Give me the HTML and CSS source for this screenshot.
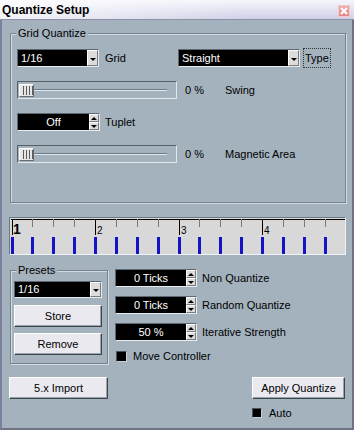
FILE: index.html
```html
<!DOCTYPE html>
<html lang="en">
<head>
  <meta charset="UTF-8">
  <meta name="viewport" content="width=device-width, initial-scale=1.0">
  <title>Quantize Setup</title>
  <link rel="stylesheet" href="styles.css">
</head>
<body>
  <div class="window">
    <div class="titlebar">
      <span class="title">Quantize Setup</span>
      <span class="close">
        <svg width="10" height="10" viewBox="0 0 10 10"><path d="M2 2 L8 8 M8 2 L2 8" stroke="#fff" stroke-width="2"/></svg>
      </span>
    </div>

    <div class="pane">
      <!-- Grid quantize -->
      <div class="group grid-group">
        <div class="group-title">Grid Quantize</div>

        <div class="row row-first">
          <div class="combo combo-grid"><span class="val">1/16</span><span class="drop"></span></div>
          <span class="lbl lbl-grid">Grid</span>
          <div class="combo combo-type"><span class="val">Straight</span><span class="drop"></span></div>
          <span class="lbl focus">Type</span>
        </div>

        <div class="row">
          <div class="slider"><span class="thumb"></span><span class="groove"></span></div>
          <span class="pct">0 %</span>
          <span class="lbl">Swing</span>
        </div>

        <div class="row">
          <div class="spin spin-tuplet"><span class="val">Off</span><span class="arrows"><span class="up"></span><span class="down"></span></span></div>
          <span class="lbl lbl-spin">Tuplet</span>
        </div>

        <div class="row">
          <div class="slider"><span class="thumb"></span><span class="groove"></span></div>
          <span class="pct">0 %</span>
          <span class="lbl">Magnetic Area</span>
        </div>
      </div>

      <!-- Grid display -->
      <div class="ruler">
        <svg width="335" height="36" viewBox="0 0 335 36">
          <rect x="1" y="1" width="334" height="1" fill="#000"/>
          <g stroke="#7a7a7a" stroke-width="1">
            <line x1="22.5" y1="1" x2="22.5" y2="9"/>
            <line x1="43.5" y1="1" x2="43.5" y2="9"/>
            <line x1="64.5" y1="1" x2="64.5" y2="9"/>
            <line x1="106.5" y1="1" x2="106.5" y2="9"/>
            <line x1="127.5" y1="1" x2="127.5" y2="9"/>
            <line x1="148.5" y1="1" x2="148.5" y2="9"/>
            <line x1="189.5" y1="1" x2="189.5" y2="9"/>
            <line x1="210.5" y1="1" x2="210.5" y2="9"/>
            <line x1="231.5" y1="1" x2="231.5" y2="9"/>
            <line x1="273.5" y1="1" x2="273.5" y2="9"/>
            <line x1="294.5" y1="1" x2="294.5" y2="9"/>
            <line x1="315.5" y1="1" x2="315.5" y2="9"/>
          </g>
          <g stroke="#000" stroke-width="1">
            <line x1="2.5" y1="1" x2="2.5" y2="17"/>
            <line x1="85.5" y1="1" x2="85.5" y2="17"/>
            <line x1="169.5" y1="1" x2="169.5" y2="17"/>
            <line x1="252.5" y1="1" x2="252.5" y2="17"/>
          </g>
          <text x="3" y="16" class="bar-num bar-first">1</text>
          <text x="87" y="16" class="bar-num">2</text>
          <text x="171" y="16" class="bar-num">3</text>
          <text x="254" y="16" class="bar-num">4</text>
          <g fill="#1414c4">
            <rect x="1" y="19" width="3" height="17"/>
            <rect x="21" y="19" width="3" height="17"/>
            <rect x="42" y="19" width="3" height="17"/>
            <rect x="63" y="19" width="3" height="17"/>
            <rect x="84" y="19" width="3" height="17"/>
            <rect x="105" y="19" width="3" height="17"/>
            <rect x="126" y="19" width="3" height="17"/>
            <rect x="147" y="19" width="3" height="17"/>
            <rect x="168" y="19" width="3" height="17"/>
            <rect x="188" y="19" width="3" height="17"/>
            <rect x="209" y="19" width="3" height="17"/>
            <rect x="230" y="19" width="3" height="17"/>
            <rect x="251" y="19" width="3" height="17"/>
            <rect x="272" y="19" width="3" height="17"/>
            <rect x="293" y="19" width="3" height="17"/>
            <rect x="314" y="19" width="3" height="17"/>
          </g>
        </svg>
      </div>

      <!-- Presets + options -->
      <div class="lower">
        <div class="group presets">
          <div class="group-title">Presets</div>
          <div class="combo combo-preset"><span class="val">1/16</span><span class="drop"></span></div>
          <div class="btn btn-store">Store</div>
          <div class="btn btn-remove">Remove</div>
        </div>

        <div class="options">
          <div class="opt">
            <div class="spin"><span class="val">0 Ticks</span><span class="arrows"><span class="up"></span><span class="down"></span></span></div>
            <span class="lbl lbl-spin">Non Quantize</span>
          </div>
          <div class="opt">
            <div class="spin"><span class="val">0 Ticks</span><span class="arrows"><span class="up"></span><span class="down"></span></span></div>
            <span class="lbl lbl-spin">Random Quantize</span>
          </div>
          <div class="opt">
            <div class="spin"><span class="val">50 %</span><span class="arrows"><span class="up"></span><span class="down"></span></span></div>
            <span class="lbl lbl-spin">Iterative Strength</span>
          </div>
          <div class="check-row move">
            <span class="check"></span>
            <span class="lbl">Move Controller</span>
          </div>
        </div>
      </div>

      <div class="bottom">
        <div class="btn btn-import">5.x Import</div>
        <div class="apply-col">
          <div class="btn btn-apply">Apply Quantize</div>
          <div class="check-row auto">
            <span class="check check-small"></span>
            <span class="lbl">Auto</span>
          </div>
        </div>
      </div>
    </div>
  </div>
</body>
</html>
```

FILE: styles.css
```css
body {
  margin: 0;
  font-family: "Liberation Sans", Arial, sans-serif;
  font-size: 11px;
  color: #000;
  background: #a4b2be;
}
.window {
  width: 354px;
  height: 430px;
  display: flex;
  flex-direction: column;
  background: #a4b2be;
}

/* title bar */
.titlebar {
  height: 19px;
  border-bottom: 1px solid #8d90a8;
  display: flex;
  align-items: center;
  justify-content: space-between;
  padding: 0 4px 0 2px;
  background: linear-gradient(to right, rgba(255,255,255,0.75), rgba(255,255,255,0) 70%),
              linear-gradient(#f6f6fc, #cfd1e6);
}
.title {
  font-size: 12px;
  font-weight: bold;
  padding-top: 1px;
}
.close {
  width: 10px;
  height: 10px;
  margin-top: 2px;
  border: 1px solid #f6caca;
  background: linear-gradient(#f2aaaa, #e48686);
  display: flex;
}

.pane {
  flex: 1;
  border-left: 2px solid #7d7f9f;
  border-right: 2px solid #6f7388;
  border-bottom: 2px solid #6f7388;
}

/* group boxes */
.group {
  border: 1px solid #76828e;
  box-shadow: inset 1px 1px 0 #d3dbe2, 1px 1px 0 #d3dbe2;
}
.group-title {
  width: fit-content;
  margin: -8px 0 0 -1px;
  padding: 0 2px;
  line-height: 14px;
  background: #a4b2be;
}
.grid-group {
  margin: 13px 6px 0 8px;
  padding: 0 6px 39px 6px;
}
.row {
  display: flex;
  align-items: center;
  height: 18px;
  margin-top: 14px;
}
.row-first {
  margin-top: 9px;
}
.lbl {
  white-space: nowrap;
}
.lbl-grid {
  width: 79px;
  padding-left: 6px;
  box-sizing: border-box;
}
.lbl-spin {
  margin-left: 5px;
}
.focus {
  margin-left: 3px;
  padding: 0 1px;
  line-height: 18px;
  border: 1px dotted #333;
}
.pct {
  width: 40px;
  margin-left: 8px;
}

/* combo boxes */
.combo {
  display: flex;
  height: 18px;
  box-sizing: border-box;
  background: #000;
  color: #fff;
  border: 1px solid;
  border-color: #5e6872 #e6ecf0 #e6ecf0 #5e6872;
}
.combo .val {
  flex: 1;
  padding-left: 3px;
  line-height: 16px;
}
.combo-grid { width: 82px; }
.combo-type { width: 122px; }
.combo-preset {
  width: 88px;
  height: 17px;
  margin-top: 4px;
}
.combo-preset .val { line-height: 15px; }
.drop {
  width: 11px;
  box-sizing: border-box;
  background: #dcdcdc;
  border: 1px solid;
  border-color: #fff #7a7a7a #7a7a7a #fff;
  display: flex;
  justify-content: center;
  align-items: center;
  padding-top: 2px;
}
.drop::after {
  content: "";
  border-left: 3px solid transparent;
  border-right: 3px solid transparent;
  border-top: 3px solid #000;
}

/* spin boxes */
.spin {
  display: flex;
  width: 82px;
  height: 18px;
  box-sizing: border-box;
  background: #000;
  color: #fff;
  border: 1px solid;
  border-color: #5e6872 #e6ecf0 #e6ecf0 #5e6872;
}
.spin .val {
  flex: 1;
  text-align: center;
  line-height: 16px;
}
.spin-tuplet { width: 83px; }
.arrows {
  width: 10px;
  display: flex;
  flex-direction: column;
  background: #a4b2be;
}
.arrows span {
  flex: 1;
  background: #dcdcdc;
  border: 1px solid;
  border-color: #fff #7a7a7a #7a7a7a #fff;
  display: flex;
  justify-content: center;
  align-items: center;
}
.arrows .up::after {
  content: "";
  border-left: 3px solid transparent;
  border-right: 3px solid transparent;
  border-bottom: 3px solid #000;
}
.arrows .down::after {
  content: "";
  border-left: 3px solid transparent;
  border-right: 3px solid transparent;
  border-top: 3px solid #000;
}

/* sliders */
.slider {
  width: 160px;
  height: 18px;
  box-sizing: border-box;
  border: 1px solid;
  border-color: #56606a #e2e8ed #e2e8ed #56606a;
  display: flex;
  align-items: center;
  padding: 0 9px 0 1px;
}
.thumb {
  width: 15px;
  height: 13px;
  box-sizing: border-box;
  border: 1px solid;
  border-color: #fff #6a6a6a #6a6a6a #fff;
  background: repeating-linear-gradient(to right, #e6e6e6 0 2px, #5a5a5a 2px 3px) 1px 1px / 12px 9px no-repeat, #e6e6e6;
}
.groove {
  flex: 1;
  height: 1px;
  background: #6f7b86;
  border-bottom: 1px solid #e0e6eb;
}

/* grid display */
.ruler {
  margin: 14px 6px 0 7px;
  height: 38px;
  box-sizing: border-box;
  border: 1px solid;
  border-color: #6e7984 #eef2f5 #eef2f5 #6e7984;
  background: #d8d8d8;
}
.ruler svg {
  display: block;
}
.bar-num {
  font-family: "Liberation Sans", Arial, sans-serif;
  font-size: 10px;
  fill: #000;
}
.bar-first {
  font-size: 14px;
  font-weight: bold;
}

/* lower section */
.lower {
  display: flex;
  align-items: flex-start;
  margin: 15px 0 0 8px;
}
.presets {
  width: 98px;
  box-sizing: border-box;
  padding: 0 5px 8px 3px;
}
.presets .group-title {
  margin-left: 2px;
}
.btn {
  height: 22px;
  box-sizing: border-box;
  background: #e9e9ef;
  border: 1px solid;
  border-color: #fff #3e454c #3e454c #fff;
  box-shadow: inset -1px -1px 0 #9aa2aa;
  display: flex;
  align-items: center;
  justify-content: center;
}
.btn-store { margin-top: 7px; }
.btn-remove { margin-top: 6px; }

.options {
  margin: -1px 0 0 7px;
}
.opt {
  display: flex;
  align-items: center;
  margin-bottom: 9px;
}
.check-row {
  display: flex;
  align-items: center;
}
.check {
  width: 11px;
  height: 11px;
  box-sizing: border-box;
  background: #000;
  border: 1px solid;
  border-color: #4a525a #c6ced6 #c6ced6 #4a525a;
}
.move {
  margin: 0 0 0 1px;
}
.move .lbl {
  margin-left: 6px;
}

.bottom {
  display: flex;
  justify-content: space-between;
  align-items: flex-start;
  margin: 13px 7px 0 7px;
}
.btn-import { width: 99px; }
.btn-apply { width: 93px; }
.auto {
  margin-top: 8px;
}
.check-small {
  width: 10px;
  height: 10px;
}
.auto .lbl {
  margin-left: 7px;
}
```
